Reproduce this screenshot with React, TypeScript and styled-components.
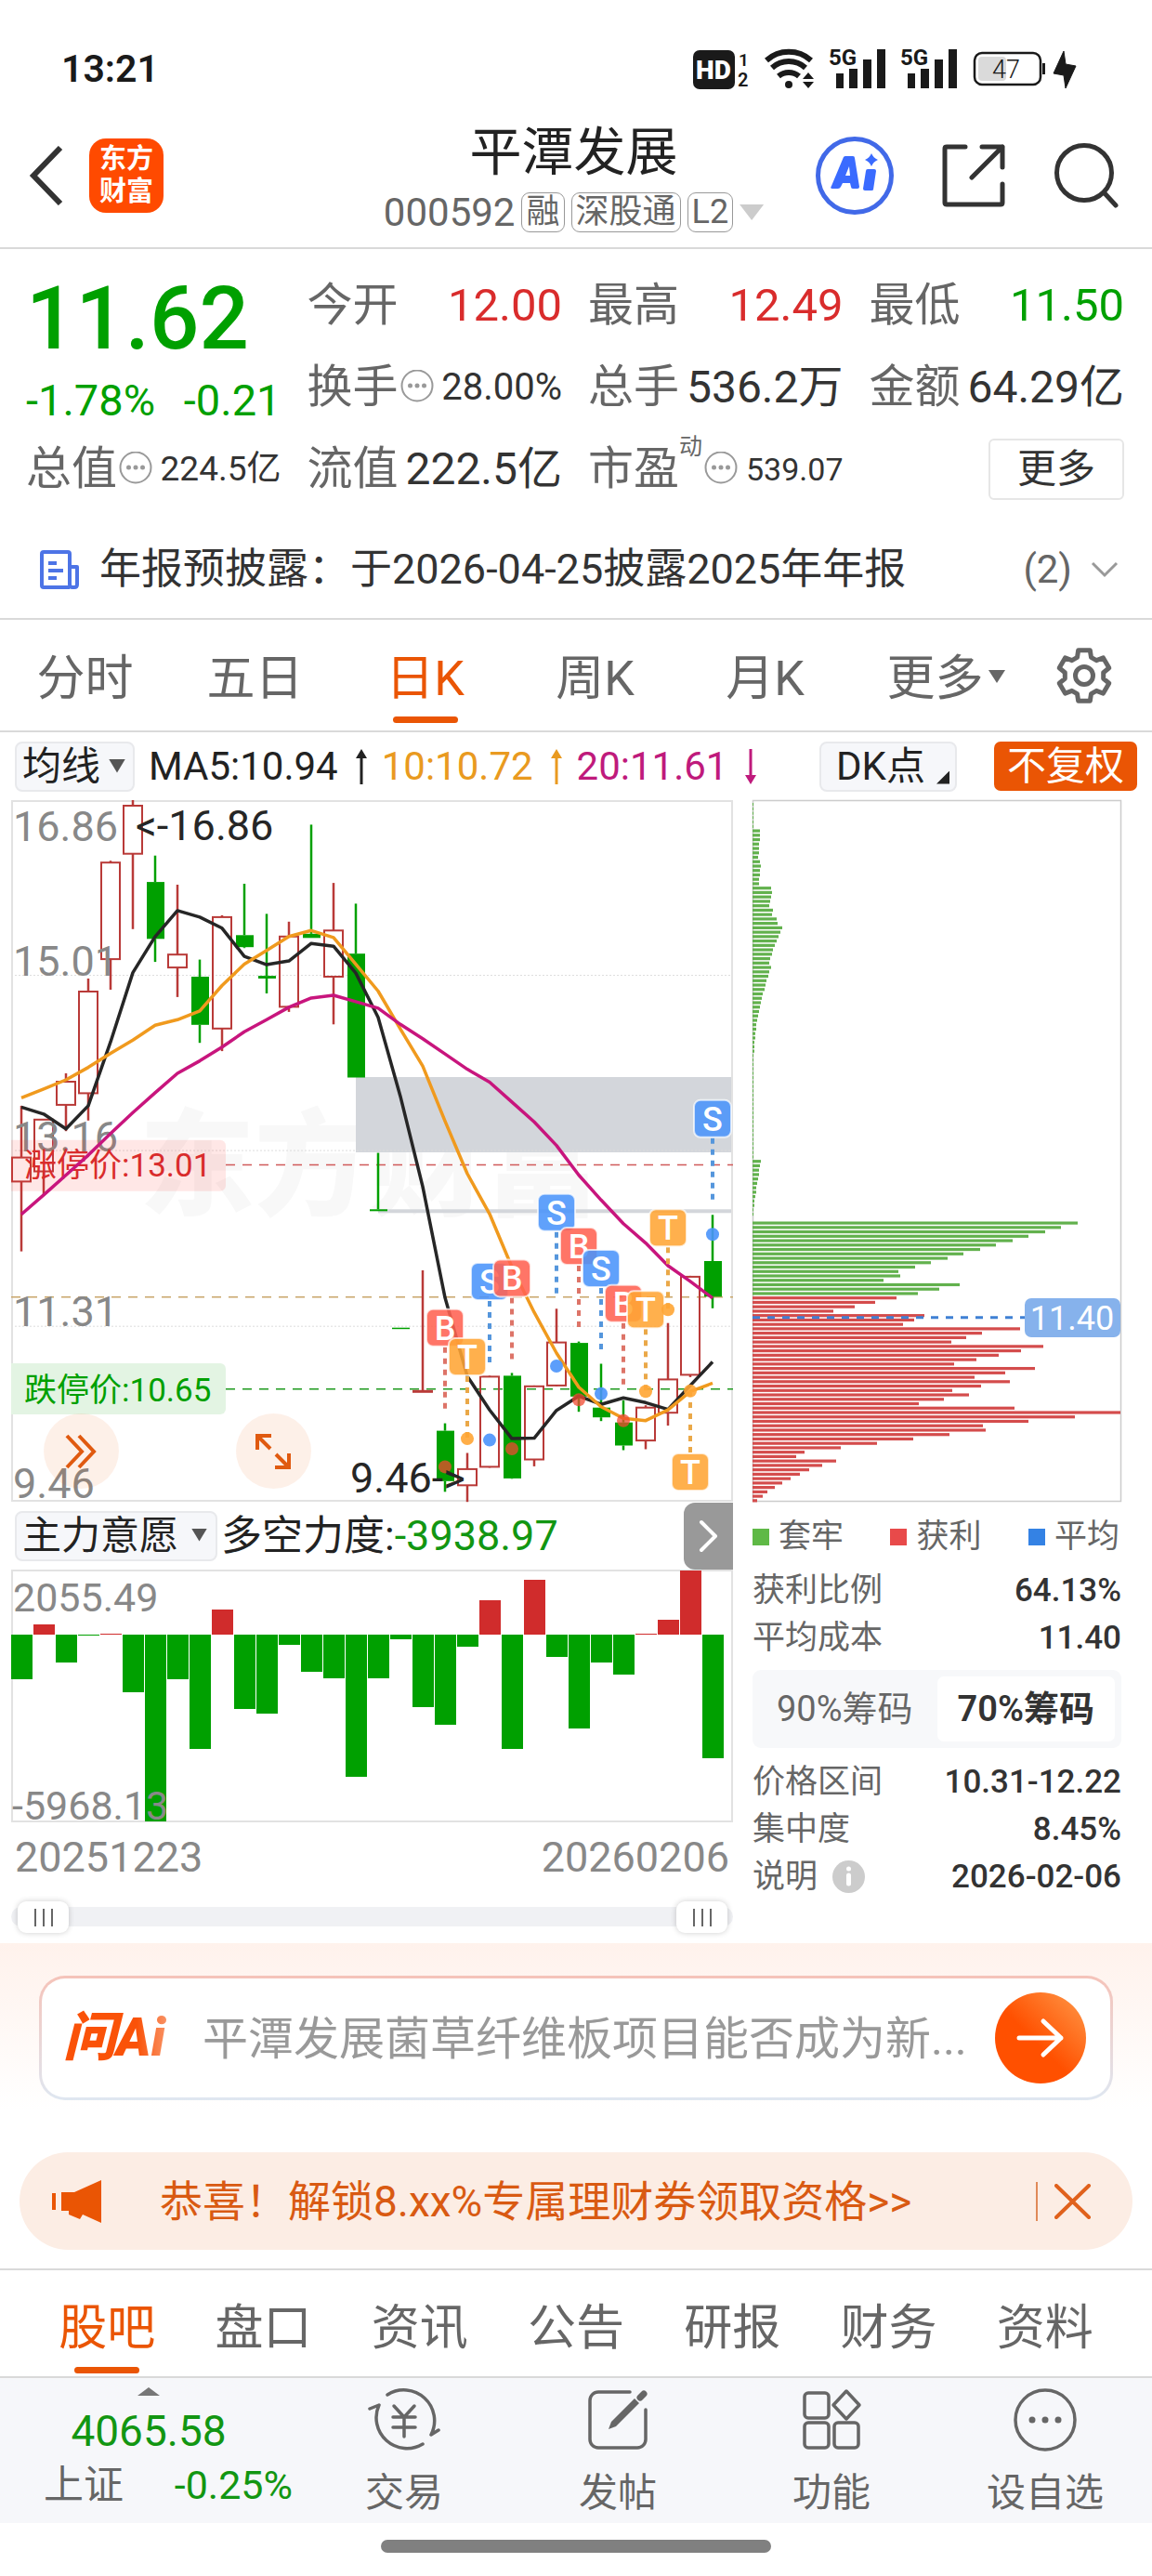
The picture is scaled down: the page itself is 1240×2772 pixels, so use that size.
import React, { useState } from "react";
import styled, { createGlobalStyle } from "styled-components";

const c = {
  up: "#d92c2c",
  down: "#00a000",
  brand: "#ea5504",
  text: "#333333",
  ink: "#222222",
  sub: "#666666",
  mute: "#888888",
  line: "#d9d9d9",
  frame: "#e2e2e2",
  panel: "#f6f7fa",
};
const FONT = `Roboto, "Noto Sans CJK SC", sans-serif`;

const Global = createGlobalStyle`
  *, *::before, *::after { box-sizing: border-box; }
  body { margin: 0; background: #fff; font-family: ${FONT}; color: ${c.text}; }
  button, input, select { font: inherit; color: inherit; }
  button { border: 0; padding: 0; background: none; cursor: pointer; }
  svg { display: block; flex: none; }
`;

const Page = styled.div`
  width: 100%;
  overflow: hidden;
`;

/* ---------- status bar ---------- */
const StatusBar = styled.div`
  display: flex;
  align-items: center;
  justify-content: space-between;
  height: 108px;
  padding: 40px 80px 0 66px;
`;
const Clock = styled.span`
  font-size: 41px;
  line-height: 48px;
  font-weight: 600;
  color: #1a1a1a;
`;

function Signal({ x }: { x: number }) {
  return (
    <g transform={`translate(${x} 0)`}>
      <text x="-1" y="19" fontSize="24" fontWeight="700">5G</text>
      <rect x="7" y="28" width="8" height="16" />
      <rect x="21" y="23" width="9" height="21" />
      <rect x="36" y="13" width="9" height="31" />
      <rect x="51" y="2" width="9" height="42" />
    </g>
  );
}

function StatusIcons() {
  return (
    <svg width="414" height="58" viewBox="0 -6 414 58" fill="#1a1a1a" fontFamily={FONT}>
      <rect x="0" y="3" width="45" height="42" rx="7" />
      <text x="22" y="34" fontSize="28" fontWeight="900" fill="#fff" textAnchor="middle">HD</text>
      <text x="49" y="20" fontSize="19" fontWeight="600">1</text>
      <text x="48" y="42" fontSize="20" fontWeight="600">2</text>
      <g fill="none" stroke="#1a1a1a" strokeWidth="6">
        <path d="M79 14 A36 36 0 0 1 127 14" />
        <path d="M85 22 A27 27 0 0 1 121 22" />
        <path d="M92 31 A17 17 0 0 1 114 31" />
      </g>
      <circle cx="103" cy="40" r="4" />
      <path d="M124 27 L130 34 H118 Z M118 37 H130 L124 44 Z" />
      <Signal x={147} />
      <Signal x={224} />
      <rect x="303" y="6" width="71" height="34" rx="8" fill="none" stroke="#1a1a1a" strokeWidth="2.5" />
      <rect x="307" y="10" width="30" height="26" rx="4" fill="#dadada" />
      <rect x="376" y="17" width="3" height="12" />
      <text x="337" y="33" fontSize="27" fontWeight="300" textAnchor="middle">47</text>
      <path d="M399 4 L388 28 L399 30 L401 44 L412 20 L401 18 Z" stroke="#1a1a1a" strokeLinejoin="round" />
    </svg>
  );
}

/* ---------- header ---------- */
const Header = styled.header`
  display: grid;
  grid-template-columns: 1fr auto 1fr;
  align-items: center;
  height: 160px;
  padding: 3px 36px 0 31px;
  border-bottom: 2px solid ${c.line};
`;
const HeaderSide = styled.div<{ $end?: boolean }>`
  display: flex;
  align-items: center;
  gap: ${(p) => (p.$end ? 52 : 28)}px;
  justify-content: ${(p) => (p.$end ? "flex-end" : "flex-start")};
`;
const Logo = styled.a`
  display: grid;
  place-content: center;
  width: 80px;
  height: 80px;
  border-radius: 18px;
  background: #ff4a00;
  color: #fff;
  font-size: 29px;
  line-height: 35px;
  font-weight: 700;
  text-decoration: none;
`;
const TitleBlock = styled.div`
  display: flex;
  flex-direction: column;
  align-items: center;
  gap: 10px;
  padding-top: 4px;
`;
const Title = styled.h1`
  margin: 0;
  font-size: 56px;
  line-height: 66px;
  font-weight: 400;
  color: ${c.ink};
`;
const CodeRow = styled.div`
  display: flex;
  align-items: center;
  gap: 7px;
  height: 44px;
  font-size: 42px;
  line-height: 44px;
  color: ${c.sub};
`;
const Badge = styled.span`
  padding: 0 4px;
  border: 1px solid #999;
  border-radius: 9px;
  font-size: 36px;
  line-height: 41px;
`;
const Caret = styled.i<{ $w: number; $h: number; $color: string; $up?: boolean }>`
  display: block;
  flex: none;
  width: ${(p) => p.$w}px;
  height: ${(p) => p.$h}px;
  background: ${(p) => p.$color};
  clip-path: ${(p) => (p.$up ? "polygon(50% 0, 100% 100%, 0 100%)" : "polygon(0 0, 100% 0, 50% 100%)")};
`;

/* ---------- quote ---------- */
const Quote = styled.section`
  display: grid;
  grid-template-columns: repeat(4, 1fr);
  grid-auto-rows: 88px;
  column-gap: 28px;
  padding: 17px 30px 0 28px;
`;
const PriceCell = styled.div`
  grid-row: span 2;
  padding-top: 8px;
  color: ${c.down};
`;
const Price = styled.div`
  font-size: 94px;
  line-height: 100px;
  font-weight: 500;
`;
const Change = styled.div`
  display: flex;
  justify-content: space-between;
  margin-top: 14px;
  font-size: 47px;
  line-height: 48px;
`;
const Metric = styled.div`
  display: flex;
  align-items: center;
  justify-content: space-between;
  white-space: nowrap;
`;
const MetricLabel = styled.span`
  display: flex;
  align-items: center;
  font-size: 49px;
  line-height: 56px;
  color: ${c.sub};
`;
const Sup = styled.sup`
  align-self: flex-start;
  margin: -10px 0 0;
  font-size: 25px;
  line-height: 28px;
`;
const MetricValue = styled.span<{ $size?: number; $color?: string }>`
  font-size: ${(p) => p.$size ?? 48}px;
  line-height: 56px;
  color: ${(p) => p.$color ?? c.text};
`;
const MoreButton = styled.button`
  justify-self: end;
  align-self: center;
  width: 146px;
  height: 66px;
  border: 2px solid #e6e6e6;
  border-radius: 6px;
  font-size: 42px;
  line-height: 48px;
`;

const Hint = () => (
  <svg width="38" height="38" viewBox="0 0 38 38" fill="none" stroke="#999" strokeWidth="2">
    <circle cx="20" cy="17" r="16.5" />
    <g fill="#999" stroke="none">
      <circle cx="12.500" cy="17" r="2.500" />
      <circle cx="20" cy="17" r="2.500" />
      <circle cx="27.500" cy="17" r="2.500" />
    </g>
  </svg>
);

type MetricData = { label: string; value: string; color?: string; size?: number; hint?: boolean; sup?: string };
const metrics: MetricData[] = [
  { label: "今开", value: "12.00", color: c.up, size: 49 },
  { label: "最高", value: "12.49", color: c.up, size: 49 },
  { label: "最低", value: "11.50", color: c.down, size: 49 },
  { label: "换手", value: "28.00%", size: 40, hint: true },
  { label: "总手", value: "536.2万" },
  { label: "金额", value: "64.29亿" },
  { label: "总值", value: "224.5亿", size: 37, hint: true },
  { label: "流值", value: "222.5亿" },
  { label: "市盈", value: "539.07", size: 34, hint: true, sup: "动" },
];

/* ---------- announcement ---------- */
const Notice = styled.a`
  display: flex;
  align-items: center;
  height: 118px;
  padding: 12px 36px 0 43px;
  border-bottom: 2px solid ${c.line};
  color: ${c.text};
  font-size: 45px;
  line-height: 52px;
  text-decoration: none;
  white-space: nowrap;
`;
const NoticeText = styled.span`
  flex: 1;
  margin-left: 22px;
`;
const NoticeCount = styled.span`
  margin-right: 20px;
  font-size: 42px;
  color: ${c.sub};
`;

/* ---------- tabs ---------- */
const PeriodTabs = styled.nav`
  display: grid;
  grid-template-columns: repeat(6, 183fr) 142fr;
  height: 121px;
  border-bottom: 2px solid ${c.line};
`;
const TabButton = styled.button<{ $on?: boolean }>`
  position: relative;
  display: grid;
  place-items: center;
  padding-top: 8px;
  font-size: 52px;
  line-height: 60px;
  color: ${(p) => (p.$on ? c.brand : c.sub)};
  &::after {
    content: "";
    position: absolute;
    left: calc(50% - 35px);
    bottom: 8px;
    width: 70px;
    height: 7px;
    border-radius: 4px;
    background: ${(p) => (p.$on ? c.brand : "transparent")};
  }
`;
const TabCaret = styled.span`
  position: absolute;
  right: 16px;
  top: 54px;
`;
const SettingsButton = styled.button`
  display: grid;
  place-items: center;
  padding-right: 4px;
`;

const gearPath = (() => {
  const pts: string[] = [];
  for (let i = 0; i < 6; i++) {
    const mid = -90 + i * 60;
    for (const [da, r] of [[-21, 21], [-13, 28], [13, 28], [21, 21]]) {
      const a = ((mid + da) * Math.PI) / 180;
      pts.push(`${(32 + r * Math.cos(a)).toFixed(1)} ${(32 + r * Math.sin(a)).toFixed(1)}`);
    }
  }
  return `M${pts.join("L")}Z`;
})();

/* ---------- indicator toolbar ---------- */
const IndicatorBar = styled.div`
  display: flex;
  align-items: center;
  height: 73px;
  padding: 0 16px;
  font-size: 42px;
  line-height: 50px;
  white-space: nowrap;
`;
const SelectBox = styled.span<{ $w: number; $caret: number }>`
  position: relative;
  flex: none;
  width: ${(p) => p.$w}px;
  height: 54px;
  & > i {
    position: absolute;
    right: ${(p) => p.$caret}px;
    top: 19px;
    pointer-events: none;
  }
`;
const Select = styled.select`
  appearance: none;
  width: 100%;
  height: 100%;
  padding: 0 0 0 6px;
  border: 2px solid #e8e9ec;
  border-radius: 8px;
  background: ${c.panel};
  color: ${c.ink};
  font-size: 42px;
  line-height: 50px;
`;
const Average = styled.span<{ $color: string }>`
  display: flex;
  align-items: center;
  gap: 18px;
  margin-left: 15px;
  color: ${(p) => p.$color};
`;
const DkButton = styled.button`
  position: relative;
  width: 148px;
  height: 54px;
  margin-left: auto;
  padding-right: 16px;
  border: 2px solid #e8e9ec;
  border-radius: 8px;
  background: ${c.panel};
  color: ${c.ink};
  line-height: 48px;
  &::after {
    content: "";
    position: absolute;
    right: 6px;
    bottom: 6px;
    width: 14px;
    height: 14px;
    background: ${c.ink};
    clip-path: polygon(100% 0, 100% 100%, 0 100%);
  }
`;
const AdjustButton = styled.button`
  width: 154px;
  height: 53px;
  margin-left: 40px;
  border-radius: 7px;
  background: ${c.brand};
  color: #fff;
  line-height: 50px;
`;

const Arrow = ({ down }: { down?: boolean }) => (
  <svg width="14" height="40" viewBox="0 0 14 40" fill="currentColor">
    <path d={down ? "M5.500 1 H8.500 V29 H13 L7 39 L1 29 H5.500 Z" : "M5.500 39 H8.500 V11 H13 L7 1 L1 11 H5.500 Z"} />
  </svg>
);

/* ---------- charts ---------- */
const ChartArea = styled.section`
  display: grid;
  grid-template-columns: 777fr 397fr;
  column-gap: 21px;
  padding: 0 33px 11px 12px;
`;
const Chart = styled.svg`
  width: 100%;
  height: auto;
  overflow: visible;
  font-family: ${FONT};
`;
const ChartWrap = styled.div`
  position: relative;
`;
const RoundTool = styled.button<{ $left: string }>`
  position: absolute;
  left: ${(p) => p.$left};
  bottom: 14px;
  display: grid;
  place-items: center;
  width: 81px;
  height: 81px;
  border-radius: 50%;
  background: rgba(234, 85, 4, 0.09);
`;

const STEP = 24;
const cx = (i: number) => 11 + i * STEP;
const py = (t: number) => Math.round(((t - 22) / 2.01) * 10) / 10;

/* direction, high, body top, body bottom, low */
type Candle = [number, number, number, number, number];
const candles: Candle[] = [
  [1, 683, 795, 847, 998], [1, 713, 713, 825, 875], [1, 613, 631, 681, 738], [1, 408, 436, 656, 715],
  [1, 153, 157, 366, 432], [1, 22, 34, 138, 301], [0, 142, 199, 322, 372], [1, 205, 356, 384, 448],
  [0, 367, 404, 508, 547], [1, 271, 275, 516, 565], [0, 203, 314, 340, 342], [0, 268, 402, 408, 440],
  [1, 285, 317, 469, 480], [0, 75, 311, 320, 320], [1, 201, 304, 404, 507], [0, 246, 354, 622, 622],
  [0, 785, 907, 911, 911], [0, 1163, 1163, 1166, 1166], [1, 1039, 1300, 1302, 1302], [0, 1370, 1386, 1495, 1518],
  [1, 1434, 1469, 1504, 1540], [1, 1267, 1269, 1464, 1466], [0, 1261, 1267, 1489, 1490], [1, 1288, 1290, 1448, 1463],
  [1, 1122, 1195, 1288, 1290], [0, 1193, 1196, 1312, 1345], [0, 1241, 1336, 1357, 1365], [0, 1320, 1368, 1418, 1428],
  [1, 1331, 1336, 1407, 1426], [1, 1153, 1275, 1347, 1375], [1, 1051, 1053, 1265, 1270], [0, 919, 1019, 1096, 1121],
];
const ma5 = [686, 701, 733, 683, 545, 395, 317, 261, 275, 299, 360, 378, 370, 332, 338, 396, 492, 663, 858, 1098, 1268, 1341, 1403, 1402, 1342, 1311, 1329, 1315, 1325, 1340, 1288, 1237];
const ma10 = [666, 647, 627, 600, 570, 541, 509, 497, 478, 423, 377, 347, 317, 304, 319, 377, 435, 517, 597, 716, 830, 917, 1032, 1130, 1218, 1292, 1334, 1359, 1364, 1341, 1301, 1283];
const ma20 = [918, 876, 833, 790, 743, 698, 655, 613, 586, 556, 523, 497, 470, 450, 444, 458, 472, 507, 538, 571, 604, 632, 675, 718, 769, 833, 887, 938, 980, 1029, 1063, 1099];
const poly = (a: number[]) => a.map((t, i) => `${cx(i)},${py(t)}`).join(" ");

const markColor: Record<string, string> = { B: "#ff6252", S: "#4a94fb", T: "#ffa534" };
const stemColor: Record<string, string> = { B: "#dd7468", S: "#5596dc", T: "#eaa848" };
/* candle index, kind, badge centre, dot */
const marks: [number, string, number, number][] = [
  [19, "B", 1163, 1464], [20, "T", 1226, 1403], [21, "S", 1063, 1406], [22, "B", 1056, 1425], [24, "S", 914, 1246],
  [25, "B", 987, 1319], [26, "S", 1035, 1306], [27, "B", 1111, 1364], [28, "T", 1124, 1301], [29, "T", 947, 1124],
  [30, "T", 1475, 1300], [31, "S", 711, 961],
];

function PriceChart() {
  return (
    <Chart viewBox="0 0 777 755" role="img" aria-label="日K线图">
      <text x="386" y="437" fontSize="124" fontWeight="900" fill="#f8f8f8" textAnchor="middle">东方财富</text>
      <rect x="371" y={py(621)} width="406" height="81" fill="#d3d6db" />
      <rect x="395" y={py(907)} width="382" height="4" fill="#d3d6db" />
      <g stroke="#dcdcdc" strokeWidth="1" strokeDasharray="2 2">
        {[401, 780, 1160].map((t) => <line key={t} x1="0" x2="777" y1={py(t)} y2={py(t)} />)}
      </g>
      <rect x="1" y="1" width="775" height="753" fill="none" stroke={c.frame} strokeWidth="2" />
      <g strokeWidth="1.500" strokeDasharray="10 8">
        <line x1="231" x2="777" y1={py(811)} y2={py(811)} stroke="#d05a5a" />
        <line x1="0" x2="777" y1={py(1097)} y2={py(1097)} stroke="#c9a66a" />
        <line x1="231" x2="777" y1={py(1296)} y2={py(1296)} stroke="#1f9a1f" />
      </g>
      {candles.map(([rise, h, t, b, l], i) => {
        const x = cx(i);
        const color = rise ? "#b93a38" : c.down;
        return (
          <g key={i} stroke={color} strokeWidth="2.500">
            <line x1={x} x2={x} y1={py(h)} y2={py(t)} />
            <line x1={x} x2={x} y1={py(b)} y2={py(l)} />
            {rise ? (
              <rect x={x - 10} y={py(t)} width="20" height={Math.max(1, py(b) - py(t))} fill="none" strokeWidth="2" />
            ) : (
              <rect x={x - 9} y={py(t)} width="19" height={py(b) - py(t)} fill={color} stroke="none" />
            )}
          </g>
        );
      })}
      <g fill={c.mute} fontSize="45">
        <text x="2" y="44">16.86</text>
        <text x="2" y="189">15.01</text>
        <text x="2" y="378">13.16</text>
        <text x="2" y="566">11.31</text>
        <text x="2" y="751">9.46</text>
      </g>
      <path d={`M0 ${py(757)} H225 a6 6 0 0 1 6 6 v43 a6 6 0 0 1 -6 6 H0 Z`} fill="#ff3b30" fillOpacity="0.120" />
      <path d={`M0 ${py(1240)} H225 a6 6 0 0 1 6 6 v43 a6 6 0 0 1 -6 6 H0 Z`} fill="#e3f4e3" />
      <text x="14" y="405" fontSize="35" fill={c.up}>涨停价:13.01</text>
      <text x="14" y="647" fontSize="35" fill={c.down}>跌停价:10.65</text>
      <g fill="none" strokeWidth="3.500" strokeLinejoin="round">
        <polyline points={poly(ma5)} stroke="#262626" />
        <polyline points={poly(ma10)} stroke="#f09a1e" />
        <polyline points={poly(ma20)} stroke="#c8157d" />
      </g>
      {marks.map(([i, kind, badge, dot]) => {
        const x = cx(i);
        const y = py(badge);
        const below = badge > dot;
        const s = below ? y - 21 : y + 21;
        return (
          <g key={i}>
            <line x1={x} x2={x} y1={s} y2={below ? s - 66 : s + 67} stroke={stemColor[kind]} strokeWidth="4" strokeDasharray="6 6" />
            <circle cx={x} cy={py(dot)} r="7" fill={kind === "B" ? "#f04a30" : markColor[kind]} fillOpacity={kind === "B" ? 0.75 : 0.9} />
            <rect x={x - 20} y={y - 20} width="40" height="40" rx="7" fill={markColor[kind]} fillOpacity="0.880" stroke="#fff" strokeWidth="2" strokeOpacity="0.700" />
            <text x={x} y={y + 13} fontSize="36" fontWeight="500" fill="#fff" textAnchor="middle">{kind}</text>
          </g>
        );
      })}
      <g fill="#262626" fontSize="45">
        <text x="134" y="43">&lt;-16.86</text>
        <text x="365" y="745">9.46-&gt;</text>
      </g>
    </Chart>
  );
}

const forceBars = [-48, 11, -30, -1, 1, -62, -201, -48, -123, 27, -80, -85, -11, -40, -47, -153, -47, -5, -78, -97, -13, 37, -123, 59, -24, -101, -30, -43, 1, 16, 69, -133];

function ForceChart() {
  return (
    <Chart viewBox="0 0 777 272" role="img" aria-label="多空力度">
      <rect x="1" y="1" width="775" height="270" fill="none" stroke={c.frame} strokeWidth="2" />
      {forceBars.map((v, i) => (
        <rect key={i} x={i * STEP} y={v > 0 ? 70 - v : 70} width="23" height={Math.abs(v)} fill={v > 0 ? "#d02c2c" : c.down} />
      ))}
      <g fill={c.mute} fontSize="43">
        <text x="2" y="45">2055.49</text>
        <text x="1" y="269">-5968.13</text>
      </g>
    </Chart>
  );
}

const rep = (n: number, v: number) => Array<number>(n).fill(v);
const chips = [
  ...rep(6, 1), 8, 8, 8, 7, 7, 7, 6, 8, 9, 8, 8, 7, 7,
  20, 21, 20, 19, 18, 22, 21, 26, 27, 32, 30, 28, 26, 24, 22, 21, 19, 18, 20, 18, 17, 15, 14, 13, 11, 10, 9, 8, 7, 6, 5, 4, 4, 3, 3, 2, 2, 2,
  ...rep(24, 1), 9, 8, 7, 7, 6, 5, 4, 4, 3, 2, 2, 1, 1, 0, 0,
].slice(0, 95);
const trapped = [350, 332, 315, 297, 280, 262, 245, 227, 210, 192, 175, 157, 159, 141, 223, 201, 178];
const profit = [
  155, 132, 110, 87, 185, 174, 162, 288, 247, 230, 214, 313, 289, 265, 241, 217, 304, 272, 239, 277, 246, 215, 233, 206, 179,
  282, 396, 347, 297, 248, 251, 212, 173, 134, 95, 56, 47, 90, 75, 61, 51, 41, 32, 24, 16, 11, 5,
];

function ChipChart() {
  const rows = [...chips, ...trapped, ...profit];
  const redFrom = chips.length + trapped.length;
  return (
    <Chart viewBox="0 0 397 755" role="img" aria-label="筹码分布">
      <rect x="0.500" y="0.500" width="396" height="754" fill="none" stroke="#cccccc" strokeWidth="1.500" />
      {rows.map((w, i) => (
        <rect key={i} x="0" y={3 + i * 4.742} width={w} height="3.200" fill={i < redFrom ? "#62b14d" : "#d44c4c"} />
      ))}
      <line x1="0" x2="295" y1={py(1141)} y2={py(1141)} stroke="#3f80d4" strokeWidth="3" strokeDasharray="8 8" />
      <rect x="293" y="536" width="103" height="42" rx="7" fill="#86b2ec" />
      <text x="344" y="570" fontSize="36" fill="#fff" textAnchor="middle">11.40</text>
    </Chart>
  );
}

const ForceBar = styled.div`
  display: flex;
  align-items: center;
  height: 73px;
  padding-left: 4px;
  font-size: 44px;
  line-height: 52px;
  color: ${c.ink};
  white-space: nowrap;
`;
const ForceValue = styled.span`
  margin-left: 4px;
  & > b {
    font-size: 45px;
    font-weight: 400;
    color: #129612;
  }
`;
const NextButton = styled.button`
  display: grid;
  place-items: center;
  width: 53px;
  height: 72px;
  margin-left: auto;
  border-radius: 12px 0 0 12px;
  background: #999;
`;
const DateRow = styled.div`
  display: flex;
  justify-content: space-between;
  padding: 0 4px;
  font-size: 45px;
  line-height: 76px;
  color: ${c.mute};
`;
const RangeTrack = styled.div`
  position: relative;
  height: 34px;
  margin-top: 9px;
  &::before {
    content: "";
    position: absolute;
    inset: 6px 0 7px;
    border-radius: 11px;
    background: #f0f1f4;
  }
`;
const RangeInput = styled.input`
  appearance: none;
  position: absolute;
  left: 7px;
  top: 0;
  width: calc(100% - 13px);
  height: 34px;
  margin: 0;
  background: none;
  pointer-events: none;
  &::-webkit-slider-thumb {
    appearance: none;
    pointer-events: auto;
    width: 55px;
    height: 34px;
    border-radius: 9px;
    box-shadow: 0 0 6px rgba(0, 0, 0, 0.2);
    background:
      linear-gradient(#666, #666) 18px 8px / 2px 19px no-repeat,
      linear-gradient(#666, #666) 27px 8px / 2px 19px no-repeat,
      linear-gradient(#666, #666) 36px 8px / 2px 19px no-repeat,
      #fff;
  }
`;

/* ---------- chip panel ---------- */
const Legend = styled.div`
  display: flex;
  justify-content: space-between;
  padding: 12px 2px 5px 0;
  font-size: 35px;
  line-height: 51px;
  color: ${c.sub};
`;
const LegendItem = styled.span<{ $color: string }>`
  display: flex;
  align-items: center;
  gap: 10px;
  &::before {
    content: "";
    width: 18px;
    height: 18px;
    background: ${(p) => p.$color};
  }
`;
const Facts = styled.dl`
  margin: 0;
  padding-top: 2px;
  font-size: 35px;
  line-height: 51px;
`;
const Fact = styled.div`
  display: flex;
  justify-content: space-between;
  & > dt {
    display: flex;
    align-items: center;
    gap: 16px;
    color: ${c.sub};
  }
  & > dd {
    margin: 0;
    font-weight: 500;
  }
`;
const InfoDot = () => (
  <svg width="35" height="35" viewBox="0 0 35 35">
    <circle cx="17.500" cy="17.500" r="17.500" fill="#cccccc" />
    <circle cx="17.500" cy="9" r="2.500" fill="#fff" />
    <rect x="15" y="13.500" width="5" height="14" rx="2.500" fill="#fff" />
  </svg>
);
const Segments = styled.div`
  display: grid;
  grid-template-columns: 198fr 191fr;
  height: 84px;
  margin: 9px 0;
  padding: 7px 7px 7px 0;
  border-radius: 9px;
  background: #f7f8fa;
`;
const Segment = styled.button<{ $on?: boolean }>`
  border-radius: 7px;
  font-size: 38px;
  line-height: 44px;
  background: ${(p) => (p.$on ? "#fff" : "none")};
  color: ${(p) => (p.$on ? c.text : c.sub)};
  font-weight: ${(p) => (p.$on ? 600 : 400)};
`;

/* ---------- ask AI ---------- */
const AskSection = styled.section`
  padding: 35px 42px 56px;
  background: linear-gradient(#fff2ec, #fff 80%);
`;
const AskBox = styled.form`
  display: flex;
  align-items: center;
  height: 134px;
  padding: 0 26px 0 23px;
  border: 3px solid transparent;
  border-radius: 28px;
  background:
    linear-gradient(#fff, #fff) padding-box,
    linear-gradient(#f5c3b9, #dfe7f1) border-box;
`;
const AskLogo = styled.span`
  flex: none;
  width: 132px;
  font-size: 57px;
  line-height: 68px;
  font-weight: 900;
  font-style: italic;
  color: transparent;
  background: linear-gradient(90deg, #fa5208 60%, #f9a078 90%);
  background-clip: text;
  -webkit-background-clip: text;
  white-space: nowrap;
`;
const AskInput = styled.input`
  flex: 1;
  min-width: 0;
  margin-left: 18px;
  padding: 4px 0 0;
  border: 0;
  outline: 0;
  background: none;
  font-size: 49px;
  line-height: 60px;
  &::placeholder {
    color: #999;
    opacity: 1;
  }
`;
const AskButton = styled.button`
  display: grid;
  place-items: center;
  flex: none;
  width: 98px;
  height: 98px;
  border-radius: 50%;
  background: linear-gradient(45deg, #ff5000 45%, #ff9a4a);
`;

/* ---------- banner ---------- */
const Banner = styled.aside`
  display: flex;
  align-items: center;
  height: 105px;
  margin: 0 21px 20px;
  padding: 0 44px 0 35px;
  border-radius: 53px;
  background: #fcede4;
  color: #d95a12;
  font-size: 46px;
  line-height: 56px;
  white-space: nowrap;
`;
const BannerLink = styled.a`
  flex: 1;
  margin-left: 62px;
  color: inherit;
  text-decoration: none;
`;
const Divider = styled.i`
  width: 2px;
  height: 42px;
  margin-right: 18px;
  background: #e08a58;
`;

/* ---------- bottom ---------- */
const InfoTabs = styled.nav`
  display: grid;
  grid-template-columns: repeat(7, 1fr);
  height: 118px;
  padding: 0 31px;
  border-top: 2px solid ${c.line};
  border-bottom: 2px solid ${c.line};
`;
const InfoTab = styled(TabButton)`
  padding-top: 12px;
  &::after {
    bottom: 3px;
  }
`;
const Dock = styled.footer`
  display: grid;
  grid-template-columns: 320fr repeat(4, 230fr);
  height: 156px;
  background: ${c.panel};
`;
const IndexCard = styled.a`
  display: flex;
  flex-direction: column;
  align-items: center;
  padding-top: 10px;
  color: #129612;
  text-decoration: none;
  white-space: nowrap;
`;
const IndexValue = styled.span`
  margin-top: 11px;
  font-size: 46px;
  line-height: 54px;
`;
const IndexRow = styled.span`
  display: flex;
  justify-content: space-between;
  width: 268px;
  margin: 5px 0 0 42px;
  font-size: 43px;
  line-height: 52px;
  & > span {
    color: ${c.sub};
  }
`;
const DockItem = styled.button`
  display: flex;
  flex-direction: column;
  align-items: center;
  padding-top: 9px;
  font-size: 42px;
  line-height: 50px;
  color: ${c.sub};
  & > svg {
    margin-bottom: 18px;
  }
`;
const HomeArea = styled.div`
  height: 57px;
  padding-top: 18px;
  &::before {
    content: "";
    display: block;
    width: 420px;
    height: 14px;
    margin: 0 auto;
    border-radius: 7px;
    background: #808080;
  }
`;

const dockIcons: Record<string, React.ReactNode> = {
  交易: (
    <>
      <path d="M18 9 A33 33 0 0 1 65 52 L73 47" />
      <path d="M56 62 A33 33 0 0 1 9 20 L-1 24" />
      <path d="M25 21 L36 33 L47 21 M24 33 H48 M24 44 H48 M36 33 V54" />
    </>
  ),
  发帖: (
    <>
      <path d="M49 6 H15 a9 9 0 0 0 -9 9 V57 a9 9 0 0 0 9 9 H57 a9 9 0 0 0 9 -9 V25" />
      <path d="M26 46 L29 38 L54 13 L59 18 L34 43 Z" fill="currentColor" stroke="none" />
      <path d="M60 12 L64 8" strokeWidth="7" />
    </>
  ),
  功能: (
    <>
      <rect x="7" y="7" width="26" height="27" rx="4" />
      <rect x="7" y="39" width="26" height="27" rx="4" />
      <rect x="39" y="39" width="26" height="27" rx="4" />
      <path d="M52 5 L66 20 L52 35 L38 20 Z" />
    </>
  ),
  设自选: (
    <>
      <circle cx="36" cy="36" r="32" />
      <g fill="currentColor" stroke="none">
        <circle cx="22" cy="36" r="3.500" />
        <circle cx="36" cy="36" r="3.500" />
        <circle cx="50" cy="36" r="3.500" />
      </g>
    </>
  ),
};

const periods = ["分时", "五日", "日K", "周K", "月K", "更多"];
const infoTabs = ["股吧", "盘口", "资讯", "公告", "研报", "财务", "资料"];

export default function App() {
  const [period, setPeriod] = useState("日K");
  const [share, setShare] = useState("70%筹码");
  const [info, setInfo] = useState("股吧");
  const [from, setFrom] = useState(0);
  const [to, setTo] = useState(100);

  return (
    <Page>
      <Global />
      <StatusBar>
        <Clock>13:21</Clock>
        <StatusIcons />
      </StatusBar>

      <Header>
        <HeaderSide>
          <button aria-label="返回">
            <svg width="37" height="64" viewBox="0 0 37 64" fill="none" stroke="#333" strokeWidth="6">
              <path d="M34 2 L5 32 L34 62" />
            </svg>
          </button>
          <Logo href="#home"><span>东方</span><span>财富</span></Logo>
        </HeaderSide>
        <TitleBlock>
          <Title>平潭发展</Title>
          <CodeRow>
            <span>000592</span>
            <Badge>融</Badge>
            <Badge>深股通</Badge>
            <Badge>L2</Badge>
            <Caret $w={26} $h={17} $color="#cccccc" />
          </CodeRow>
        </TitleBlock>
        <HeaderSide $end>
          <button aria-label="AI">
            <svg width="84" height="84" viewBox="0 0 84 84" fontFamily={FONT}>
              <circle cx="42" cy="42" r="39.500" fill="none" stroke="#4169e8" strokeWidth="5" />
              <path d="M30 22 Q31 21 32 21 H40 Q42 21 42 23 L47 54 Q47 56 45 56 H40 Q38 56 38 54 L37 50 H29 L27 54 Q26 56 24 56 H18 Q15 56 17 53 Z M32 42 H37 L36 32 Z" fill="#3a6bff" fillRule="evenodd" />
              <path d="M56 35 H63 Q65 35 65 37 L62 57 Q62 58 60 58 H53 Q51 58 51 56 L54 37 Q54 35 56 35 Z" fill="#3a6bff" />
              <path d="M60 18 Q62 23 67 25 Q62 27 60 32 Q58 27 53 25 Q58 23 60 18 Z" fill="#3a6bff" />
            </svg>
          </button>
          <button aria-label="分享">
            <svg width="68" height="68" viewBox="0 0 68 68" fill="none" stroke="#333" strokeWidth="5" strokeLinecap="round" strokeLinejoin="round">
              <path d="M25 3 H5 Q3 3 3 5 V63 Q3 65 5 65 H63 Q65 65 65 63 V43" />
              <path d="M43 3 H65 V25 M65 3 L32 36" />
            </svg>
          </button>
          <button aria-label="搜索">
            <svg width="70" height="70" viewBox="0 0 70 70" fill="none" stroke="#333" strokeWidth="5" strokeLinecap="round">
              <circle cx="33" cy="32" r="29.500" />
              <path d="M55 54 L67 67" />
            </svg>
          </button>
        </HeaderSide>
      </Header>

      <Quote>
        <PriceCell>
          <Price>11.62</Price>
          <Change><span>-1.78%</span><span>-0.21</span></Change>
        </PriceCell>
        {metrics.map((m) => (
          <Metric key={m.label}>
            <MetricLabel>
              {m.label}
              {m.sup && <Sup>{m.sup}</Sup>}
              {m.hint && <Hint />}
            </MetricLabel>
            <MetricValue $size={m.size} $color={m.color}>{m.value}</MetricValue>
          </Metric>
        ))}
        <MoreButton>更多</MoreButton>
      </Quote>

      <Notice href="#notice">
        <svg width="42" height="44" viewBox="0 0 42 44" fill="none" stroke="#4d74e6" strokeWidth="4" strokeLinejoin="round">
          <path d="M32 41 H4 Q2 41 2 39 V5 Q2 3 4 3 H30 Q32 3 32 5 V38 Q32 41 35 41 H37 Q40 41 40 38 V19 H32" />
          <path d="M9 15 H18 M9 23 H25 M9 31 H18" />
        </svg>
        <NoticeText>年报预披露：于2026-04-25披露2025年年报</NoticeText>
        <NoticeCount>(2)</NoticeCount>
        <svg width="30" height="18" viewBox="0 0 30 18" fill="none" stroke="#999" strokeWidth="3">
          <path d="M2 2 L15 15 L28 2" />
        </svg>
      </Notice>

      <PeriodTabs>
        {periods.map((p) => (
          <TabButton key={p} $on={p === period} onClick={() => setPeriod(p)}>
            {p}
            {p === "更多" && <TabCaret><Caret $w={18} $h={14} $color={c.sub} /></TabCaret>}
          </TabButton>
        ))}
        <SettingsButton aria-label="设置">
          <svg width="64" height="64" viewBox="0 0 64 64" fill="none" stroke="#666" strokeWidth="5" strokeLinejoin="round">
            <path d={gearPath} />
            <circle cx="32" cy="32" r="9.500" />
          </svg>
        </SettingsButton>
      </PeriodTabs>

      <IndicatorBar>
        <SelectBox $w={129} $caret={10}>
          <Select aria-label="主图指标"><option>均线</option></Select>
          <Caret $w={18} $h={15} $color="#555" />
        </SelectBox>
        <Average $color={c.ink}>MA5:10.94<Arrow /></Average>
        <Average $color="#e99a20">10:10.72<Arrow /></Average>
        <Average $color="#bf1a7c">20:11.61<Arrow down /></Average>
        <DkButton>DK点</DkButton>
        <AdjustButton>不复权</AdjustButton>
      </IndicatorBar>

      <ChartArea>
        <div>
          <ChartWrap>
            <PriceChart />
            <RoundTool $left="4.5%" aria-label="展开">
              <svg width="34" height="38" viewBox="0 0 34 38" fill="none" stroke="#e05a10" strokeWidth="4">
                <path d="M2 2 L18 19 L2 36 M15 2 L31 19 L15 36" />
              </svg>
            </RoundTool>
            <RoundTool $left="31.1%" aria-label="全屏">
              <svg width="40" height="40" viewBox="0 0 40 40" fill="none" stroke="#e05a10" strokeWidth="4">
                <path d="M18 3 H3 V18 M3 3 L17 17 M37 22 V37 H22 M37 37 L23 23" />
              </svg>
            </RoundTool>
          </ChartWrap>
          <ForceBar>
            <SelectBox $w={218} $caret={11}>
              <Select aria-label="副图指标"><option>主力意愿</option></Select>
              <Caret $w={17} $h={14} $color="#555" />
            </SelectBox>
            <ForceValue>多空力度:<b>-3938.97</b></ForceValue>
            <NextButton aria-label="下一个">
              <svg width="22" height="36" viewBox="0 0 22 36" fill="none" stroke="#fff" strokeWidth="4" strokeLinecap="round" strokeLinejoin="round">
                <path d="M3 3 L18 18 L3 33" />
              </svg>
            </NextButton>
          </ForceBar>
          <ForceChart />
          <DateRow><span>20251223</span><span>20260206</span></DateRow>
          <RangeTrack>
            <RangeInput type="range" aria-label="开始日期" value={from} onChange={(e) => setFrom(Number(e.target.value))} />
            <RangeInput type="range" aria-label="结束日期" value={to} onChange={(e) => setTo(Number(e.target.value))} />
          </RangeTrack>
        </div>

        <div>
          <ChipChart />
          <Legend>
            <LegendItem $color="#5fb946">套牢</LegendItem>
            <LegendItem $color="#e84a4a">获利</LegendItem>
            <LegendItem $color="#3482e4">平均</LegendItem>
          </Legend>
          <Facts>
            <Fact><dt>获利比例</dt><dd>64.13%</dd></Fact>
            <Fact><dt>平均成本</dt><dd>11.40</dd></Fact>
          </Facts>
          <Segments>
            {["90%筹码", "70%筹码"].map((s) => (
              <Segment key={s} $on={s === share} onClick={() => setShare(s)}>{s}</Segment>
            ))}
          </Segments>
          <Facts>
            <Fact><dt>价格区间</dt><dd>10.31-12.22</dd></Fact>
            <Fact><dt>集中度</dt><dd>8.45%</dd></Fact>
            <Fact><dt>说明<InfoDot /></dt><dd>2026-02-06</dd></Fact>
          </Facts>
        </div>
      </ChartArea>

      <AskSection>
        <AskBox onSubmit={(e) => e.preventDefault()}>
          <AskLogo>问Ai</AskLogo>
          <AskInput aria-label="问Ai" placeholder="平潭发展菌草纤维板项目能否成为新..." />
          <AskButton aria-label="发送">
            <svg width="52" height="44" viewBox="0 0 52 44" fill="none" stroke="#fff" strokeWidth="5" strokeLinecap="round" strokeLinejoin="round">
              <path d="M3 22 H48 M29 4 L48 22 L29 40" />
            </svg>
          </AskButton>
        </AskBox>
      </AskSection>

      <Banner>
        <svg width="54" height="48" viewBox="0 0 54 48" fill="#ea5504">
          <rect x="0" y="15" width="4" height="18" />
          <path d="M10 14 H24 L53 1 V47 L33 38 L30 43 L18 38 V34 H10 Z" />
        </svg>
        <BannerLink href="#coupon">恭喜！解锁8.xx%专属理财券领取资格&gt;&gt;</BannerLink>
        <Divider />
        <button aria-label="关闭">
          <svg width="40" height="38" viewBox="0 0 40 38" fill="none" stroke="#e0611c" strokeWidth="4" strokeLinecap="round">
            <path d="M2 2 L37 36 M37 2 L2 36" />
          </svg>
        </button>
      </Banner>

      <InfoTabs>
        {infoTabs.map((t) => (
          <InfoTab key={t} $on={t === info} onClick={() => setInfo(t)}>{t}</InfoTab>
        ))}
      </InfoTabs>

      <Dock>
        <IndexCard href="#index">
          <Caret $w={24} $h={9} $color="#777" $up />
          <IndexValue>4065.58</IndexValue>
          <IndexRow><span>上证</span>-0.25%</IndexRow>
        </IndexCard>
        {Object.entries(dockIcons).map(([label, icon]) => (
          <DockItem key={label}>
            <svg width="78" height="72" viewBox="-3 0 78 72" fill="none" stroke="currentColor" strokeWidth="3.500" strokeLinecap="round" strokeLinejoin="round">
              {icon}
            </svg>
            {label}
          </DockItem>
        ))}
      </Dock>
      <HomeArea />
    </Page>
  );
}
